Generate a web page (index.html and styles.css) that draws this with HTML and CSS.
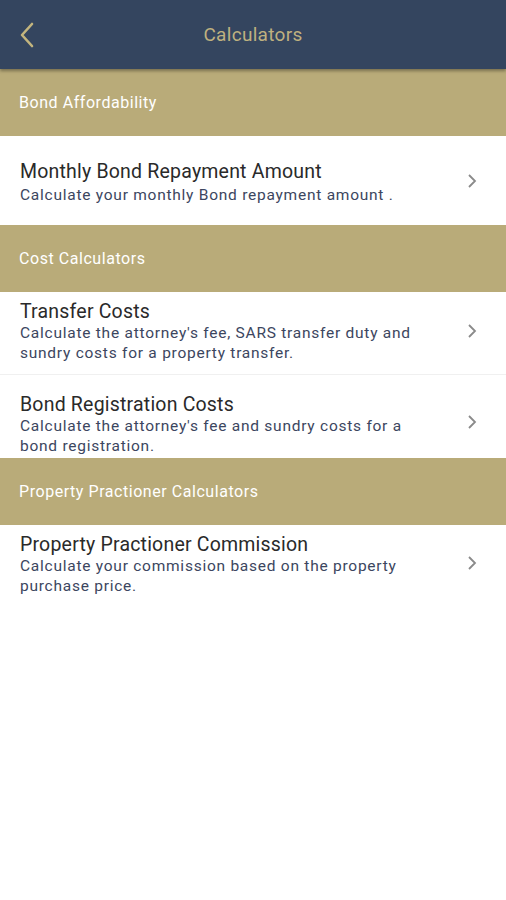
FILE: index.html
```html
<!DOCTYPE html>
<html lang="en">
    <head>
        <meta charset="UTF-8">
        <meta name="viewport" content="width=device-width, initial-scale=1.0">
        <title>Calculators</title>
        <link rel="stylesheet" href="styles.css">
    </head>
    <body>
        <header class="topbar">
            <a class="back" href="#">
                <svg width="16" height="26" viewBox="0 0 16 26">
                    <path d="M13 2 L3 13 L13 24" fill="none" stroke="#c3b57e" stroke-width="2.6" stroke-linecap="round" stroke-linejoin="round"/>
                </svg>
            </a>
            <h1>Calculators</h1>
        </header>

        <div class="section">Bond Affordability</div>
        <a class="item item-tall" href="#">
            <div class="text">
                <div class="title">Monthly Bond Repayment Amount</div>
                <div class="desc">Calculate your monthly Bond repayment amount .</div>
            </div>
            <svg class="chev" width="12" height="16" viewBox="0 0 12 16"><path d="M3 2 L9 8 L3 14" fill="none" stroke="#8a8a8a" stroke-width="1.8"/></svg>
        </a>

        <div class="section">Cost Calculators</div>
        <a class="item item-first" href="#">
            <div class="text">
                <div class="title">Transfer Costs</div>
                <div class="desc">Calculate the attorney's fee, SARS transfer duty and sundry costs for a property transfer.</div>
            </div>
            <svg class="chev" width="12" height="16" viewBox="0 0 12 16"><path d="M3 2 L9 8 L3 14" fill="none" stroke="#8a8a8a" stroke-width="1.8"/></svg>
        </a>
        <a class="item item-last" href="#">
            <div class="text">
                <div class="title">Bond Registration Costs</div>
                <div class="desc">Calculate the attorney's fee and sundry costs for a bond registration.</div>
            </div>
            <svg class="chev" width="12" height="16" viewBox="0 0 12 16"><path d="M3 2 L9 8 L3 14" fill="none" stroke="#8a8a8a" stroke-width="1.8"/></svg>
        </a>

        <div class="section">Property Practioner Calculators</div>
        <a class="item item-top" href="#">
            <div class="text">
                <div class="title">Property Practioner Commission</div>
                <div class="desc">Calculate your commission based on the property purchase price.</div>
            </div>
            <svg class="chev" width="12" height="16" viewBox="0 0 12 16"><path d="M3 2 L9 8 L3 14" fill="none" stroke="#8a8a8a" stroke-width="1.8"/></svg>
        </a>
    </body>
</html>
```

FILE: styles.css
```css
body {
    margin: 0;
    font-family: Roboto, "Noto Sans", Arial, sans-serif;
    background: #ffffff;
}
.topbar {
    position: relative;
    height: 69px;
    background: #34455f;
    display: flex;
    align-items: center;
    justify-content: center;
    box-shadow: 0 2px 3px rgba(0,0,0,0.35);
    z-index: 1;
}
.topbar h1 {
    margin: 0;
    font-size: 19px;
    font-weight: 400;
    letter-spacing: 0.3px;
    color: #bfb17f;
}
.back {
    position: absolute;
    left: 19px;
    top: 22px;
    display: flex;
}
.section {
    height: 67px;
    box-sizing: border-box;
    padding-left: 19px;
    display: flex;
    align-items: center;
    background: #b9ab79;
    color: #ffffff;
    font-size: 16px;
    letter-spacing: 0.55px;
}
.item {
    display: flex;
    align-items: center;
    height: 83px;
    box-sizing: border-box;
    padding: 0 28px 0 20px;
    text-decoration: none;
    border-bottom: 1px solid #f0f0f0;
}
.item-tall {
    height: 89px;
    padding-top: 3px;
    border-bottom: none;
}
.item-tall .title {
    margin-bottom: 2px;
}
.item-tall .chev {
    margin-top: -3px;
}
.item-first {
    padding-bottom: 4px;
}
.item-last {
    border-bottom: none;
    padding-top: 15px;
}
.item-last .chev {
    margin-top: -5px;
}
.item-top {
    align-items: flex-start;
    padding-top: 8px;
    border-bottom: none;
}
.item-top .chev {
    margin-top: 22px;
}
.text {
    flex: 1;
}
.title {
    font-size: 19.5px;
    color: #2a2a2a;
    line-height: 23px;
    letter-spacing: 0.2px;
}
.desc {
    font-size: 15.5px;
    color: #3c4660;
    line-height: 20px;
    letter-spacing: 0.75px;
    padding-right: 30px;
}
.chev {
    flex: none;
}
```
